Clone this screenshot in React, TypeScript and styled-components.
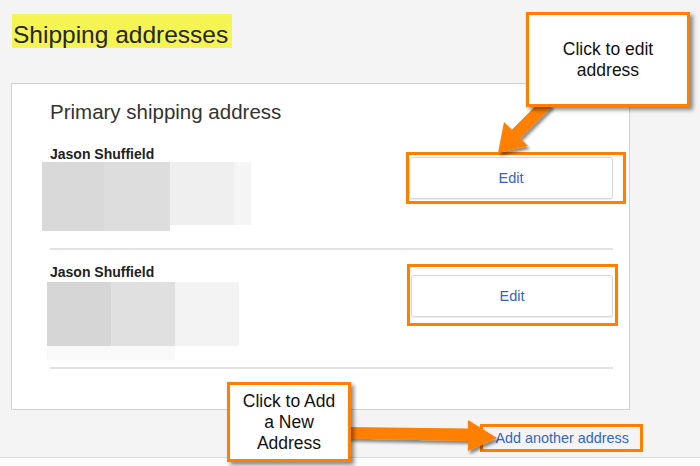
import { createGlobalStyle, styled } from "styled-components";

const ORANGE = "#ff7f00";
const LINK = "#3466c4";

const GlobalStyle = createGlobalStyle`
  html, body {
    margin: 0;
    padding: 0;
    background: #f4f4f4;
  }
  body {
    font-family: "Liberation Sans", Arial, sans-serif;
  }
`;

type Swatch = { w: number; h: number; c: string };

const primaryBlocks: Swatch[][] = [
  [
    { w: 62, h: 69, c: "#d9d9d9" },
    { w: 66, h: 69, c: "#dddddd" },
    { w: 64, h: 63, c: "#efefef" },
    { w: 17, h: 63, c: "#f5f5f5" },
  ],
];

const secondBlocks: Swatch[][] = [
  [
    { w: 64, h: 64, c: "#d6d6d6" },
    { w: 64, h: 64, c: "#e0e0e0" },
    { w: 64, h: 64, c: "#f3f3f3" },
  ],
  [{ w: 128, h: 14, c: "#f9f9f9" }],
];

const addresses = [
  { name: "Jason Shuffield", blocks: primaryBlocks, shift: 8, gap: 0, top: 0, bottom: 17, width: 204, hl: [5, 13, 5, 3] },
  { name: "Jason Shuffield", blocks: secondBlocks, shift: 3, gap: 2, top: 14, bottom: 7, width: 202, hl: [11, 5, 9, 4] },
];

const App = () => {
  return (
    <Page>
      <GlobalStyle />
      <div>
        <Title>Shipping addresses</Title>
      </div>
      <Card>
        <CardTitle>Primary shipping address</CardTitle>
        {addresses.map((a, i) => (
          <AddressRow key={i} $top={a.top} $bottom={a.bottom}>
            <div>
              <Name>{a.name}</Name>
              <Redacted $shift={a.shift} $gap={a.gap}>
                {a.blocks.map((line, j) => (
                  <SwatchLine key={j}>
                    {line.map((s, k) => (
                      <SwatchBox key={k} $w={s.w} $h={s.h} $c={s.c} />
                    ))}
                  </SwatchLine>
                ))}
              </Redacted>
            </div>
            <Highlight $gaps={a.hl}>
              <EditButton $w={a.width}>Edit</EditButton>
            </Highlight>
          </AddressRow>
        ))}
      </Card>
      <LinkRow>
        <LinkBox>
          <AddLink href="#">Add another address</AddLink>
        </LinkBox>
      </LinkRow>
      <Footer />

      <Arrows width="700" height="466" viewBox="0 0 700 466">
        <defs>
          <filter id="arrowShadow" x="-20%" y="-20%" width="140%" height="140%">
            <feDropShadow dx="2" dy="3" stdDeviation="1.5" floodColor="#000" floodOpacity="0.45" />
          </filter>
        </defs>
        <polygon
          filter="url(#arrowShadow)"
          fill={ORANGE}
          points="543.8,97.8 552.2,106.2 520.2,138.2 528,146 498,153 504,122 511.8,129.8"
        />
        <polygon
          filter="url(#arrowShadow)"
          fill={ORANGE}
          points="345,427 468,428.5 468,420 497,438 468,451 468,441 345,438.5"
        />
      </Arrows>

      <Callout $x={526} $y={12} $w={164} $h={95}>
        Click to edit
        <br />
        address
      </Callout>
      <Callout $x={227} $y={382} $w={124} $h={80}>
        Click to Add
        <br />
        a New
        <br />
        Address
      </Callout>
    </Page>
  );
};

const Page = styled.div`
  position: relative;
  width: 700px;
  height: 466px;
  overflow: hidden;
  box-sizing: border-box;
  padding: 14px 0 0 11px;
  display: flex;
  flex-direction: column;
  background: #f4f4f4;
  color: #222;
`;

const Title = styled.h1`
  display: inline-block;
  margin: 0 0 0 1px;
  padding: 8px 4px 0 1px;
  height: 34px;
  box-sizing: border-box;
  background: #f4f552;
  font-size: 24.5px;
  line-height: 26px;
  font-weight: normal;
  color: #262626;
`;

const Card = styled.section`
  margin-top: 35px;
  width: 619px;
  box-sizing: border-box;
  padding: 16px 16px 40px 38px;
  background: #fff;
  border: 1px solid #d2d2d2;
`;

const CardTitle = styled.h2`
  margin: 0 0 22px;
  font-size: 20.5px;
  line-height: 24px;
  font-weight: normal;
  color: #333;
`;

const AddressRow = styled.div<{ $top: number; $bottom: number }>`
  display: flex;
  justify-content: space-between;
  align-items: flex-start;
  padding: ${(p) => p.$top}px 0 ${(p) => p.$bottom}px;
  border-bottom: 2px solid #e2e2e2;
`;

const Name = styled.div`
  font-size: 14px;
  line-height: 16px;
  font-weight: bold;
  color: #222;
`;

const Redacted = styled.div<{ $shift: number; $gap: number }>`
  display: flex;
  flex-direction: column;
  margin-left: -${(p) => p.$shift}px;
  margin-top: ${(p) => p.$gap}px;
`;

const SwatchLine = styled.div`
  display: flex;
  align-items: flex-start;
`;

const SwatchBox = styled.span<{ $w: number; $h: number; $c: string }>`
  display: block;
  width: ${(p) => p.$w}px;
  height: ${(p) => p.$h}px;
  background: ${(p) => p.$c};
`;

const Highlight = styled.div<{ $gaps: number[] }>`
  display: flex;
  border: 3px solid ${ORANGE};
  padding: ${(p) => p.$gaps.map((g) => `${g - 3}px`).join(" ")};
  margin: ${(p) => `${11 - p.$gaps[0]}px ${-p.$gaps[1]}px ${-p.$gaps[2]}px ${-p.$gaps[3]}px`};
`;

const EditButton = styled.button<{ $w: number }>`
  width: ${(p) => p.$w}px;
  height: 42px;
  background: #fff;
  border: 1px solid #d8d8d8;
  border-radius: 3px;
  box-shadow: 0 1px 1px rgba(0, 0, 0, 0.08);
  font-family: "Liberation Sans", Arial, sans-serif;
  font-size: 14.5px;
  color: ${LINK};
  cursor: pointer;
`;

const LinkRow = styled.div`
  width: 619px;
  display: flex;
  justify-content: flex-end;
  margin-top: 14px;
`;

const LinkBox = styled.div`
  border: 3px solid ${ORANGE};
  padding: 3px 11px 3px 12px;
  margin-right: -13px;
`;

const AddLink = styled.a`
  display: block;
  font-size: 14.4px;
  line-height: 16px;
  color: ${LINK};
  text-decoration: none;
`;

const Footer = styled.div`
  flex: 1;
  margin: 5px 0 0 -11px;
  border-top: 1px solid #dadada;
  background: #fcfcfc;
`;

const Arrows = styled.svg`
  position: absolute;
  left: 0;
  top: 0;
  pointer-events: none;
`;

const Callout = styled.div<{ $x: number; $y: number; $w: number; $h: number }>`
  position: absolute;
  left: ${(p) => p.$x}px;
  top: ${(p) => p.$y}px;
  width: ${(p) => p.$w}px;
  height: ${(p) => p.$h}px;
  box-sizing: border-box;
  display: flex;
  align-items: center;
  justify-content: center;
  text-align: center;
  background: #fff;
  border: 3px solid ${ORANGE};
  box-shadow: 3px 3px 4px rgba(0, 0, 0, 0.45);
  font-size: 17.5px;
  line-height: 21px;
  color: #111;
`;

export default App;
